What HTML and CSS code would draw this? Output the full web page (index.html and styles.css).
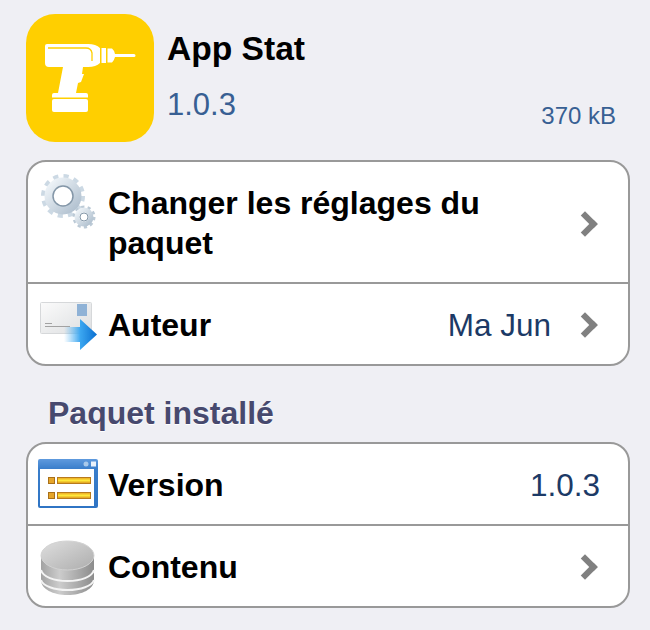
FILE: index.html
```html
<!DOCTYPE html>
<html lang="fr">
<head>
<meta charset="utf-8">
<title>App Stat</title>
<link rel="stylesheet" href="styles.css">
</head>
<body>
<header class="head">
  <svg class="app-icon" viewBox="26 14 128 128" width="128" height="128">
    <rect x="26" y="14" width="128" height="128" rx="29" fill="#ffcf00"/>
    <path fill="#fff" d="M47 44H88Q96 44 100 48V63Q96 67 88 67H83L82 74H84L81 82L78 83L76 93H86Q88 93 88 95V97.500H52V95Q52 93 54 93H58L63 67H49Q45 67 45 63V46Q45 44 47 44Z"/>
    <path fill="#fff" d="M54 99H86Q88 99 88 101V110Q88 112 86 112H54Q52 112 52 110V101Q52 99 54 99Z"/>
    <path fill="none" stroke="#ffcf00" stroke-width="1.300" d="M48 48H86Q91 48 92 53V61"/>
    <path fill="#fff" d="M101.500 48H106V63H101.500ZM107.500 48.500H112Q114 50 115 54H134Q135.500 54 135.500 55.500Q135.500 57 134 57H115Q114 61 112 62.500H107.500Z"/>
  </svg>
  <div class="head-text">
    <h1 class="title">App Stat</h1>
    <div class="head-meta">
      <span class="version">1.0.3</span>
      <span class="size">370 kB</span>
    </div>
  </div>
</header>
<section class="group group-first">
  <div class="row row-tall">
    <svg class="row-icon row-icon-top" viewBox="0 0 60 60" width="60" height="60">
      <defs>
        <linearGradient id="gear" x1="0" y1="0" x2="1" y2="1"><stop offset="0" stop-color="#f0f5f9"/><stop offset="1" stop-color="#b0c0cf"/></linearGradient>
      </defs>
      <circle cx="23" cy="24" r="19.500" fill="none" stroke="#ccd9e4" stroke-width="5" stroke-dasharray="5.100 5.100"/>
      <circle cx="23" cy="24" r="14" fill="none" stroke="url(#gear)" stroke-width="9"/>
      <circle cx="23" cy="24" r="10" fill="#fff" stroke="#8497a8" stroke-width="1.500"/>
      <circle cx="44" cy="45" r="10" fill="none" stroke="#bccad6" stroke-width="3" stroke-dasharray="3.150 3.150"/>
      <circle cx="44" cy="45" r="7" fill="none" stroke="url(#gear)" stroke-width="5"/>
      <circle cx="44" cy="45" r="4" fill="#fff" stroke="#8497a8" stroke-width="1"/>
    </svg>
    <span class="label">Changer les réglages du paquet</span>
    <span class="chev chev-tall"></span>
  </div>
  <div class="row">
    <svg class="row-icon" viewBox="0 0 60 60" width="60" height="60">
      <defs>
        <linearGradient id="env" x1="0" y1="0" x2="1" y2="1"><stop offset="0" stop-color="#fbfbfb"/><stop offset="1" stop-color="#dcdee0"/></linearGradient>
        <linearGradient id="arrow" x1="0" y1="0" x2="1" y2="0"><stop offset="0" stop-color="#5cb8f4" stop-opacity="0"/><stop offset="0.5" stop-color="#3ba6f0"/><stop offset="1" stop-color="#0a6fd0"/></linearGradient>
      </defs>
      <rect x="0.500" y="8.500" width="51" height="31" rx="1" fill="url(#env)" stroke="#d6d8da"/>
      <rect x="37" y="10" width="10" height="12" fill="#8fb2d6"/>
      <path d="M5 29.500H12M5 32.500H30" stroke="#a2a2a2" stroke-width="1"/>
      <path d="M24 33H40V25L57 40.500L40 56V48H24Z" fill="url(#arrow)"/>
    </svg>
    <span class="label">Auteur</span>
    <span class="value">Ma Jun</span>
    <span class="chev"></span>
  </div>
</section>
<h2 class="section-title">Paquet installé</h2>
<section class="group">
  <div class="row">
    <svg class="row-icon" viewBox="0 0 60 60" width="60" height="60">
      <defs>
        <linearGradient id="bar" x1="0" y1="0" x2="0" y2="1"><stop offset="0" stop-color="#e8a020"/><stop offset="0.5" stop-color="#ffe93a"/><stop offset="1" stop-color="#d98e1a"/></linearGradient>
        <linearGradient id="frame" x1="0" y1="0" x2="0" y2="1"><stop offset="0" stop-color="#5f9ade"/><stop offset="0.2" stop-color="#3a7ecb"/><stop offset="1" stop-color="#2f74c4"/></linearGradient>
      </defs>
      <rect x="-2" y="5" width="60" height="49" rx="2" fill="url(#frame)"/>
      <rect x="0" y="15" width="54" height="37" fill="#fff"/>
      <circle cx="46" cy="10" r="2.500" fill="#a9c9ea"/>
      <rect x="51" y="7.500" width="5" height="5" fill="#eaf2fb"/>
      <rect x="8.500" y="23.500" width="6" height="6" fill="#e6a52a" stroke="#a8701a"/>
      <rect x="17.500" y="23.500" width="33" height="6" fill="url(#bar)" stroke="#b87a1c"/>
      <rect x="8.500" y="38.500" width="6" height="6" fill="#e6a52a" stroke="#a8701a"/>
      <rect x="17.500" y="38.500" width="33" height="6" fill="url(#bar)" stroke="#b87a1c"/>
    </svg>
    <span class="label">Version</span>
    <span class="value value-end">1.0.3</span>
  </div>
  <div class="row">
    <svg class="row-icon" viewBox="0 0 60 60" width="60" height="60">
      <defs>
        <linearGradient id="disc" x1="0" y1="0" x2="1" y2="1"><stop offset="0" stop-color="#dedede"/><stop offset="1" stop-color="#adadad"/></linearGradient>
        <linearGradient id="side" x1="0" y1="0" x2="1" y2="0"><stop offset="0" stop-color="#a2a2a2"/><stop offset="0.35" stop-color="#cccccc"/><stop offset="1" stop-color="#8c8c8c"/></linearGradient>
      </defs>
      <path d="M1 20V44C1 53 13 59 27.500 59S54 53 54 44V20Z" fill="url(#side)"/>
      <path d="M1 34C3 41 14 45 27.500 45S52 41 54 34M1 44C3 50 14 54 27.500 54S52 50 54 44" fill="none" stroke="#f4f4f4" stroke-width="2"/>
      <ellipse cx="27.500" cy="19.500" rx="26.500" ry="14.500" fill="url(#disc)" stroke="#d2d2d2"/>
    </svg>
    <span class="label">Contenu</span>
    <span class="chev"></span>
  </div>
</section>
</body>
</html>
```
FILE: styles.css
```css
html, body { margin: 0; padding: 0; }
body {
  width: 650px;
  height: 630px;
  overflow: hidden;
  background: #efeff4;
  font-family: "Liberation Sans", Arial, sans-serif;
}
.head {
  display: flex;
  gap: 13px;
  padding: 14px 34px 0 26px;
  height: 146px;
  box-sizing: border-box;
}
.app-icon { display: block; flex: none; }
.head-text { flex: 1; min-width: 0; padding-top: 16px; }
.title {
  margin: 0;
  font-size: 33.600px;
  line-height: 38px;
  font-weight: 700;
  color: #000;
}
.head-meta {
  display: flex;
  justify-content: space-between;
  align-items: flex-end;
  margin-top: 19px;
}
.version { font-size: 31px; line-height: 36px; color: #385f93; }
.size { font-size: 24px; line-height: 28px; color: #385f93; position: relative; top: 7px; }
.group {
  margin: 0 20px 0 26px;
  background: #fff;
  border: 2px solid #999;
  border-radius: 20px;
  overflow: hidden;
}
.group-first { margin-top: 14px; }
.row {
  display: flex;
  align-items: center;
  min-height: 80px;
  padding: 0 26px 0 12px;
  border-top: 2px solid #999;
}
.row:first-child { border-top: 0; }
.row-tall { min-height: 120px; }
.row-icon {
  display: block;
  flex: none;
  margin-right: 8px;
  overflow: visible;
  filter: blur(0.5px);
}
.row-icon-top { align-self: flex-start; margin-top: 10px; }
.label {
  flex: 1;
  padding-top: 2px;
  font-size: 32px;
  line-height: 40px;
  font-weight: 700;
  color: #000;
}
.value { padding-top: 2px; font-size: 31.500px; line-height: 40px; color: #1c3a66; margin-right: 25px; }
.value-end { margin-right: 2px; }
.chev {
  flex: none;
  width: 12px;
  height: 12px;
  margin-top: 2px;
  margin-right: 8px;
  border-top: 6px solid #808080;
  border-right: 6px solid #808080;
  transform: rotate(45deg);
}
.chev-tall { margin-top: 4px; }
.section-title {
  margin: 30px 0 12px 48px;
  font-size: 32px;
  line-height: 34px;
  font-weight: 700;
  color: #47496e;
  text-shadow: 0 1px 0 #fff;
}
```
